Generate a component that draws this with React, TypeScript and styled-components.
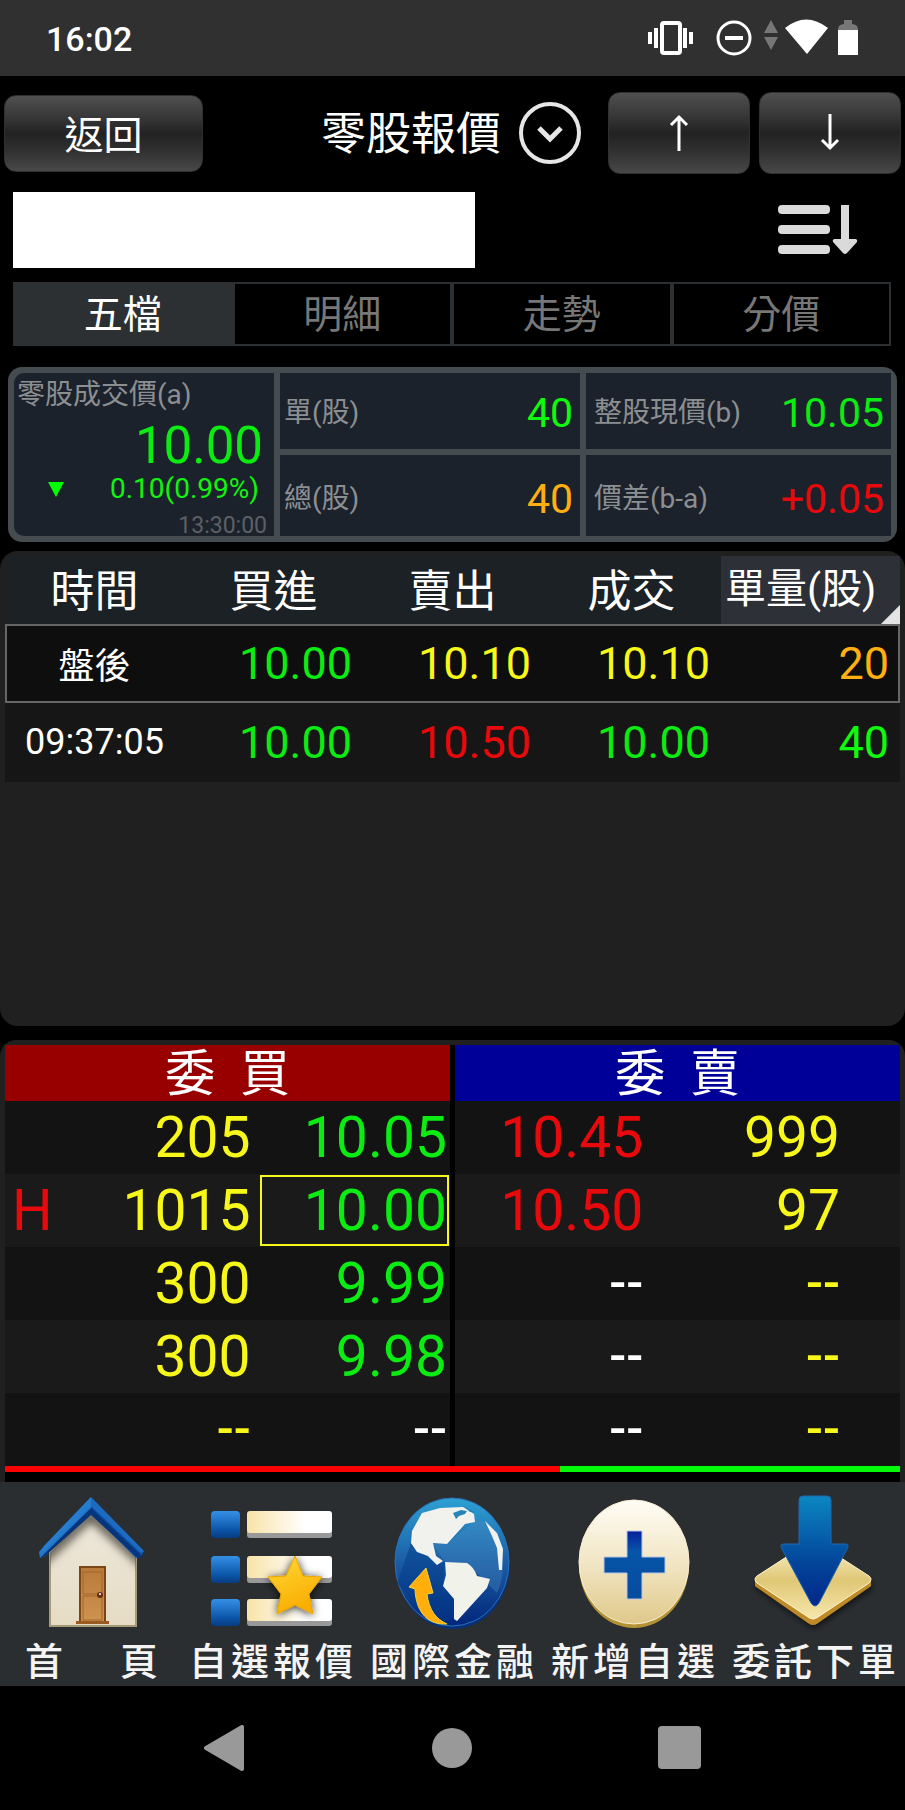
import React from 'react';
import styled, { createGlobalStyle } from 'styled-components';

const GlobalStyle = createGlobalStyle`
  * { box-sizing: border-box; }
  body { margin: 0; background: #000; }
  button, input { font: inherit; color: inherit; }
`;

const colors = {
  green: '#0bec12',
  lime: '#0dfb0d',
  yellow: '#f7f71a',
  red: '#e8090c',
  orange: '#ffb010',
  white: '#fff',
};
type Tone = keyof typeof colors;

const Screen = styled.div`
  display: flex;
  flex-direction: column;
  min-height: 100vh;
  background: #000;
  color: #fff;
  font-family: Roboto, 'Noto Sans CJK TC', sans-serif;
`;

const StatusBar = styled.header`
  display: flex;
  align-items: center;
  justify-content: space-between;
  height: 76px;
  padding: 2px 46px 0;
  background: #303030;
  font-size: 34px;
  font-weight: 500;
`;

const StatusIcons = styled.svg`
  width: 212px;
  height: 40px;
`;

const TopBar = styled.div`
  display: flex;
  align-items: center;
  gap: 9px;
  height: 114px;
  padding: 0 4px;
`;

const GlossButton = styled.button<{ $wide?: boolean }>`
  display: flex;
  align-items: center;
  justify-content: center;
  flex: 0 0 ${(p) => (p.$wide ? 199 : 142)}px;
  height: ${(p) => (p.$wide ? 77 : 82)}px;
  padding: 0 0 3px;
  border: 1px solid #303030;
  border-radius: 12px;
  background: linear-gradient(#505050, #363636 30%, #222 50%, #303030 72%, #484848);
  font-size: 39px;
  cursor: pointer;
`;

const TitleButton = styled.button`
  display: flex;
  flex: 1;
  align-items: center;
  justify-content: flex-end;
  gap: 18px;
  padding: 0 18px 0 0;
  border: 0;
  background: none;
  font-size: 45px;
`;

const TitleText = styled.span`
  padding-bottom: 5px;
`;

const SearchRow = styled.div`
  display: flex;
  align-items: center;
  justify-content: space-between;
  padding: 2px 47px 0 13px;
`;

const StockInput = styled.input`
  flex: 0 0 462px;
  min-width: 0;
  height: 76px;
  border: 0;
  padding: 0 12px;
  background: #fff;
  color: #000;
  font-size: 36px;
`;

const IconButton = styled.button`
  display: flex;
  padding: 0;
  border: 0;
  background: none;
`;

const Tabs = styled.nav`
  display: grid;
  grid-template-columns: repeat(4, 1fr);
  gap: 4px;
  margin: 14px 14px 0 13px;
  padding: 2px;
  background: #2c3033;
`;

const Tab = styled.button<{ $active?: boolean }>`
  height: 60px;
  padding: 2px 0 0;
  border: 0;
  background: ${(p) => (p.$active ? '#2c3033' : '#000')};
  color: ${(p) => (p.$active ? '#fff' : '#777')};
  font-size: 39px;
  line-height: 58px;
`;

const Summary = styled.section`
  display: grid;
  grid-template-columns: 260fr 300fr 305fr;
  grid-template-rows: 76px 81px;
  gap: 6px;
  margin: 21px 8px 0;
  padding: 6px;
  border-radius: 14px;
  background: #454c4f;
  overflow: hidden;
`;

const DealCell = styled.div`
  display: flex;
  flex-direction: column;
  grid-row: span 2;
  padding: 1px 7px 0 3px;
  border-radius: 10px 0 0 10px;
  background: #1c222c;
`;

const Cell = styled.div<{ $inset?: boolean; $low?: boolean }>`
  display: flex;
  align-items: center;
  justify-content: space-between;
  padding: ${(p) => (p.$low ? 7 : 3)}px 7px 0 ${(p) => (p.$inset ? 8 : 4)}px;
  background: #1c222c;
`;

const Label = styled.span`
  color: #8c8f92;
  font-size: 28px;
  line-height: 42px;
`;

const Price = styled.strong<{ $tone: Tone }>`
  padding-right: 4px;
  color: ${(p) => colors[p.$tone]};
  font-size: 51px;
  font-weight: 400;
  line-height: 60px;
  text-align: right;
`;

const Change = styled.div`
  display: flex;
  align-items: center;
  justify-content: space-between;
  padding: 0 8px 0 31px;
  color: #0ff50f;
  font-size: 28px;
  line-height: 26px;
`;

const Stamp = styled.time`
  padding-top: 12px;
  color: #5c6066;
  font-size: 23px;
  line-height: 24px;
  text-align: right;
`;

const Value = styled.span<{ $tone: Tone }>`
  color: ${(p) => colors[p.$tone]};
  font-size: 41px;
`;

const TradePanel = styled.section`
  height: 475px;
  margin-top: 9px;
  padding: 5px 5px 6px;
  border-radius: 18px;
  background: #202020;
`;

const TradeTable = styled.table`
  width: 100%;
  table-layout: fixed;
  border-spacing: 0;
  text-align: right;
`;

const HeadCell = styled.th`
  height: 68px;
  padding: 4px 0 0;
  background: #1b2124;
  font-size: 44px;
  font-weight: 400;
  line-height: 64px;
  text-align: center;
`;

const SortCell = styled(HeadCell)`
  padding: 0 0 2px 4px;
  background: linear-gradient(315deg, #e4e4e4 13px, #2d3036 14px);
  font-size: 41px;
  text-align: left;
`;

const TradeRow = styled.tr<{ $selected?: boolean }>`
  background: ${(p) => (p.$selected ? '#0e0e0e' : '#161616')};
  outline: ${(p) => (p.$selected ? '2px solid #666' : 'none')};
  outline-offset: -2px;
`;

const TimeCell = styled.td`
  height: 79px;
  padding: 0 0 2px;
  font-size: 36px;
  text-align: center;
`;

const NumCell = styled.td<{ $tone: Tone }>`
  height: 79px;
  padding: 0 11px 0 0;
  color: ${(p) => colors[p.$tone]};
  font-size: 45px;
`;

const BookPanel = styled.section`
  margin-top: 14px;
  padding: 5px 5px 0;
  border-radius: 16px 16px 0 0;
  background: #202020;
`;

const BookSides = styled.div`
  display: grid;
  grid-template-columns: 1fr 1fr;
  gap: 5px;
  background: #000;
`;

const BookTable = styled.table`
  width: 100%;
  table-layout: fixed;
  border-spacing: 0;
  text-align: right;
`;

const SideTitle = styled.th<{ $side: 'buy' | 'sell' }>`
  height: 56px;
  padding: 3px 0 0;
  background: ${(p) => (p.$side === 'buy' ? '#980000' : '#000098')};
  font-size: 50px;
  font-weight: 400;
  line-height: 53px;
  text-align: center;
  white-space: pre;
`;

const BookRow = styled.tr`
  background: #1a1a1a;
  &:nth-child(odd) { background: #131313; }
`;

const BookCell = styled.td<{ $tone: Tone; $boxed?: boolean; $end?: number; $empty?: boolean }>`
  height: 73px;
  padding: ${(p) => (p.$empty ? '0' : '1px')} ${(p) => p.$end ?? 3}px ${(p) => (p.$empty ? '1px' : '0')} 0;
  color: ${(p) => colors[p.$tone]};
  font-size: ${(p) => (p.$empty ? 50 : 57)}px;
  font-weight: ${(p) => (p.$empty ? 500 : 400)};
  line-height: 72px;
  outline: ${(p) => (p.$boxed ? '2px solid #f7f71a' : 'none')};
  outline-offset: -3px;
`;

const FlagCell = styled.td`
  padding: 1px 0 0 7px;
  color: #e8090c;
  font-size: 57px;
  line-height: 72px;
  text-align: left;
`;

const RatioBar = styled.div`
  display: flex;
  height: 16px;
  border-bottom: 10px solid #000;
  background: #00fa0a;
`;

const RatioBuy = styled.div`
  background: #f00;
`;

const BottomNav = styled.nav`
  display: grid;
  grid-template-columns: repeat(5, 1fr);
  height: 204px;
  background: #2a2e31;
`;

const NavLink = styled.a<{ $short?: boolean }>`
  display: flex;
  flex-direction: column;
  gap: 3px;
  padding: 11px ${(p) => (p.$short ? 23 : 9)}px 0 ${(p) => (p.$short ? 25 : 8)}px;
  color: #f4f4f4;
  font-size: 38px;
  font-weight: 500;
  line-height: 44px;
  text-align-last: justify;
  text-decoration: none;
`;

const NavIcon = styled.svg`
  align-self: center;
  flex: none;
  width: 130px;
  height: 144px;
`;

const SystemNav = styled.footer`
  display: grid;
  grid-template-columns: repeat(3, 228px);
  justify-content: center;
  align-items: center;
  height: 125px;
  padding: 0 2px 2px 0;
`;

const SystemButton = styled(IconButton)`
  justify-content: center;
`;

interface Quote { text: string; tone: Tone; }
const q = (text: string, tone: Tone): Quote => ({ text, tone });

const trades = [
  { time: '盤後', selected: true, cells: [q('10.00', 'green'), q('10.10', 'yellow'), q('10.10', 'yellow'), q('20', 'orange')] },
  { time: '09:37:05', selected: false, cells: [q('10.00', 'green'), q('10.50', 'red'), q('10.00', 'green'), q('40', 'lime')] },
];

const NONE = '--';

const bids = [
  { flag: '', size: '205', price: q('10.05', 'green') },
  { flag: 'H', size: '1015', price: q('10.00', 'green'), boxed: true },
  { flag: '', size: '300', price: q('9.99', 'green') },
  { flag: '', size: '300', price: q('9.98', 'green') },
  { flag: '', size: NONE, price: q(NONE, 'white') },
];

const asks = [
  { price: q('10.45', 'red'), size: '999' },
  { price: q('10.50', 'red'), size: '97' },
  { price: q(NONE, 'white'), size: NONE },
  { price: q(NONE, 'white'), size: NONE },
  { price: q(NONE, 'white'), size: NONE },
];

const buyRatio = 62;

const HomeIcon = () => (
  <NavIcon viewBox="0 0 130 144" aria-hidden="true">
    <defs>
      <linearGradient id="wall" x2="0" y2="1"><stop stopColor="#eee8dc" /><stop offset="1" stopColor="#e6dcc4" /></linearGradient>
      <linearGradient id="roofL" x2="1" y2="1"><stop stopColor="#2f8fe0" /><stop offset="1" stopColor="#1560b4" /></linearGradient>
      <linearGradient id="door" x2="0" y2="1"><stop stopColor="#b87a38" /><stop offset="1" stopColor="#cf9350" /></linearGradient>
      <clipPath id="wallClip"><path d="M23 60 64 19l45 41v72H23z" /></clipPath>
      <filter id="eaveBlur" x="-20%" y="-20%" width="140%" height="160%"><feGaussianBlur stdDeviation="5" /></filter>
    </defs>
    <path d="M23 60 64 19l45 41v73H23z" fill="url(#wall)" stroke="#a69a78" strokeWidth="2" />
    <g clipPath="url(#wallClip)">
      <path d="m10 72 54-50 55 50" fill="none" stroke="#57534a" strokeWidth="10" filter="url(#eaveBlur)" />
    </g>
    <path d="m12 59 1 6 5-2 46-43V4L17 53z" fill="url(#roofL)" />
    <path d="m64 4 53 54-3 6-5 1-45-45z" fill="#0d4fa6" />
    <path d="m64 4 53 54-3 2L64 13 15 60l2-7z" fill="#2a83d6" opacity=".55" />
    <path d="m13 65 51-50 52 49-5 1-47-43-46 41z" fill="#06357c" />
    <path d="M53 74h25v55H53z" fill="url(#door)" stroke="#7c4516" strokeWidth="2" />
    <path d="M56 79h19v22H56zM56 103h19v24H56z" fill="none" stroke="#a0682c" strokeWidth="1" />
    <path d="M49 128h33v3H49z" fill="#9a5a22" />
    <circle cx="73" cy="102" r="3" fill="#6b2d13" /><circle cx="73" cy="101" r="1" fill="#fff" />
  </NavIcon>
);

const listRows = [18, 63, 106];
const ListIcon = () => (
  <NavIcon viewBox="0 0 130 144" aria-hidden="true">
    <defs>
      <linearGradient id="tile" x2="0" y2="1"><stop stopColor="#3590e6" /><stop offset=".7" stopColor="#0b55a8" /><stop offset="1" stopColor="#073c80" /></linearGradient>
      <linearGradient id="strip"><stop stopColor="#f8e3a8" /><stop offset=".7" stopColor="#fff" /></linearGradient>
      <linearGradient id="star" x2=".4" y2="1"><stop stopColor="#ffd83a" /><stop offset="1" stopColor="#f9ae00" /></linearGradient>
      <filter id="starShade" x="-30%" y="-30%" width="160%" height="160%"><feDropShadow dx="0" dy="1" stdDeviation="4" floodColor="#000" floodOpacity=".8" /></filter>
    </defs>
    {listRows.map((y) => (
      <g key={y}>
        <rect x="5" y={y} width="29" height="27" rx="4" fill="url(#tile)" />
        <rect x="41" y={y + 4} width="85" height="23" rx="3" fill="#999" />
        <rect x="41" y={y} width="85" height="22" rx="3" fill="url(#strip)" />
      </g>
    ))}
    <path d="m89 63 8 20 19 1-13 17 4 20-18-9-18 9 4-20-13-17 18-1z" fill="url(#star)" stroke="#e9a400" strokeLinejoin="round" filter="url(#starShade)" />
  </NavIcon>
);

const GlobeIcon = () => (
  <NavIcon viewBox="0 0 130 144" aria-hidden="true">
    <defs>
      <linearGradient id="sea" x2="0" y2="1"><stop stopColor="#2da1d4" /><stop offset=".5" stopColor="#1b5da5" /><stop offset="1" stopColor="#02267b" /></linearGradient>
    </defs>
    <ellipse cx="66" cy="71" rx="57" ry="65" fill="#07317a" />
    <ellipse cx="65" cy="69" rx="57" ry="64" fill="url(#sea)" stroke="#2b72b6" />
    <path d="M24 50 50 72l8-3-2 24 11 13v20l-20 4L10 90z" fill="#023a88" opacity=".5" />
    <path d="M88 28 60 51l-14 0 12 18 22 1 30 30c10-20 8-50-10-72z" fill="#4a8cc4" opacity=".35" />
    <path d="m35 20 18-5 23-1 11 7 1 8-10 2-18 20-14-1 3 13 7 5-6 4-9-9-11-4-6-9 1-12z" fill="#f1f2ee" />
    <path d="m66 20 8-3 6 1-2 3-6 2-3 3zM78 14l10 5-5 0z" fill="#2784b9" />
    <path d="m58 69 22 1q7 4 10 13l13 3-3 9-30 33-3-2V106L56 93l3-11z" fill="#f1f2ea" />
    <path d="m98 28 12 12 6 16-1 21h-3l-2-22-5-12z" fill="#f1f2ee" />
    <path d="m22 94 17-19 7 25-6 1c2 16 9 25 20 30-18 1-31-10-32-35z" fill="#ffae0c" stroke="#f0d23a" strokeWidth="1" />
  </NavIcon>
);

const PlusIcon = () => (
  <NavIcon viewBox="0 0 130 144" aria-hidden="true">
    <defs>
      <linearGradient id="coin" x2="0" y2="1"><stop stopColor="#fffdf5" /><stop offset=".55" stopColor="#f0e3c0" /><stop offset="1" stopColor="#dfc889" /></linearGradient>
      <linearGradient id="cross" x2="0" y2="1"><stop stopColor="#06209a" /><stop offset=".3" stopColor="#0655a8" /><stop offset="1" stopColor="#064b9e" /></linearGradient>
    </defs>
    <ellipse cx="66" cy="72" rx="55" ry="63" fill="#b29234" />
    <ellipse cx="66" cy="69" rx="55" ry="62" fill="url(#coin)" stroke="#f8edcf" />
    <path d="M59 38h15v26h23v16H74v26H59V80H36V64h23z" fill="url(#cross)" stroke="#b9c4e2" strokeWidth="1" />
  </NavIcon>
);

const OrderIcon = () => (
  <NavIcon viewBox="-2 0 130 144" aria-hidden="true">
    <defs>
      <linearGradient id="plate" x2="0" y2="1"><stop stopColor="#fff5d0" /><stop offset=".5" stopColor="#dfc776" /><stop offset="1" stopColor="#f6e7ab" /></linearGradient>
      <linearGradient id="arrow" x2="0" y2="1"><stop stopColor="#0b87c2" /><stop offset=".6" stopColor="#03459a" /><stop offset="1" stopColor="#02288a" /></linearGradient>
      <filter id="plateShade" x="-20%" y="-20%" width="140%" height="150%"><feDropShadow dx="1" dy="3" stdDeviation="3" floodColor="#000" floodOpacity=".6" /></filter>
    </defs>
    <path d="M4 86v7l53 37q5 4 10 0l53-37v-7z" fill="#bf8a27" filter="url(#plateShade)" />
    <path d="m6 83 51-33q5-3 10 0l51 33q4 3 0 7l-51 34q-5 4-10 0L6 90q-4-4 0-7z" fill="url(#plate)" stroke="#fff6cf" />
    <path d="M52 3h24q4 0 4 4v44h14q5 0 2 5l-28 54q-4 6-8 0L31 56q-3-5 2-5h15V7q0-4 4-4z" fill="url(#arrow)" stroke="#1e66ae" />
  </NavIcon>
);

const navItems = [
  { label: '首頁', Icon: HomeIcon, short: true },
  { label: '自選報價', Icon: ListIcon },
  { label: '國際金融', Icon: GlobeIcon },
  { label: '新增自選', Icon: PlusIcon },
  { label: '委託下單', Icon: OrderIcon },
];

const Arrow = ({ down }: { down?: boolean }) => (
  <svg width="20" height="38" viewBox="0 0 20 38" fill="none" stroke="#fff" strokeWidth="3" aria-hidden="true">
    {down ? <path d="M10 1v34M2 27l8 8 8-8" /> : <path d="M10 38V4M2 12l8-8 8 8" />}
  </svg>
);

export default function App() {
  return (
    <Screen>
      <GlobalStyle />
      <StatusBar>
        <time>16:02</time>
        <StatusIcons viewBox="0 0 212 40" aria-hidden="true">
          <g fill="none" stroke="#fff">
            <rect x="15" y="4" width="18" height="30" rx="2" strokeWidth="4" />
            <path d="M3 13v12M9 9v20M38 9v20M44 13v12" strokeWidth="4" />
            <circle cx="87" cy="19" r="16" strokeWidth="3" />
            <path d="M78 19h18" strokeWidth="4" />
          </g>
          <path d="m124 1 7 13h-14zM117 18h14l-7 13z" fill="#777" />
          <path d="M138 9q21-17 43 0l-21 26z" fill="#fff" />
          <path d="M191 11q0-6 6-6v-4h8v4q6 0 6 6z" fill="#777" />
          <path d="M191 11h20v25h-20z" fill="#fff" />
        </StatusIcons>
      </StatusBar>

      <TopBar>
        <GlossButton $wide>返回</GlossButton>
        <TitleButton>
          <TitleText>零股報價</TitleText>
          <svg width="62" height="62" viewBox="0 0 62 62" fill="none" stroke="#e6e6e6" aria-hidden="true">
            <circle cx="31" cy="31" r="29" strokeWidth="4" />
            <path d="m20 26 11 11 11-11" strokeWidth="5" />
          </svg>
        </TitleButton>
        <GlossButton aria-label="上一檔"><Arrow /></GlossButton>
        <GlossButton aria-label="下一檔"><Arrow down /></GlossButton>
      </TopBar>

      <SearchRow>
        <StockInput type="text" aria-label="股票" />
        <IconButton aria-label="排序">
          <svg width="80" height="52" viewBox="0 0 80 52" fill="#dadada" aria-hidden="true">
            <rect y="1" width="52" height="9" rx="4" />
            <rect y="21" width="52" height="9" rx="4" />
            <rect y="41" width="52" height="9" rx="4" />
            <path d="M63 1h8v34h7q2 1 1 3L69 49q-2 2-4 0L55 38q-1-2 1-3h7z" />
          </svg>
        </IconButton>
      </SearchRow>

      <Tabs>
        <Tab $active>五檔</Tab>
        <Tab>明細</Tab>
        <Tab>走勢</Tab>
        <Tab>分價</Tab>
      </Tabs>

      <Summary>
        <DealCell>
          <Label>零股成交價(a)</Label>
          <Price $tone="green">10.00</Price>
          <Change>
            <svg width="16" height="15" viewBox="0 0 16 15" fill="#0f0" aria-hidden="true"><path d="M0 0h16L8 15z" /></svg>
            <span>0.10(0.99%)</span>
          </Change>
          <Stamp>13:30:00</Stamp>
        </DealCell>
        <Cell><Label>單(股)</Label><Value $tone="lime">40</Value></Cell>
        <Cell $inset><Label>整股現價(b)</Label><Value $tone="green">10.05</Value></Cell>
        <Cell $low><Label>總(股)</Label><Value $tone="orange">40</Value></Cell>
        <Cell $inset $low><Label>價差(b-a)</Label><Value $tone="red">+0.05</Value></Cell>
      </Summary>

      <TradePanel>
        <TradeTable>
          <thead>
            <tr>
              <HeadCell>時間</HeadCell>
              <HeadCell>買進</HeadCell>
              <HeadCell>賣出</HeadCell>
              <HeadCell>成交</HeadCell>
              <SortCell>單量(股)</SortCell>
            </tr>
          </thead>
          <tbody>
            {trades.map((t) => (
              <TradeRow key={t.time} $selected={t.selected}>
                <TimeCell>{t.time}</TimeCell>
                {t.cells.map((c, i) => <NumCell key={i} $tone={c.tone}>{c.text}</NumCell>)}
              </TradeRow>
            ))}
          </tbody>
        </TradeTable>
      </TradePanel>

      <BookPanel>
        <BookSides>
          <BookTable>
            <colgroup><col width="13%" /><col width="44%" /><col width="43%" /></colgroup>
            <thead><tr><SideTitle $side="buy" colSpan={3}>{'委  買'}</SideTitle></tr></thead>
            <tbody>
              {bids.map((b, i) => (
                <BookRow key={i}>
                  <FlagCell>{b.flag}</FlagCell>
                  <BookCell $tone="yellow" $end={8} $empty={b.size === NONE}>{b.size}</BookCell>
                  <BookCell $tone={b.price.tone} $boxed={b.boxed} $empty={b.price.text === NONE}>{b.price.text}</BookCell>
                </BookRow>
              ))}
            </tbody>
          </BookTable>
          <BookTable>
            <colgroup><col width="43%" /><col width="57%" /></colgroup>
            <thead><tr><SideTitle $side="sell" colSpan={2}>{'委  賣'}</SideTitle></tr></thead>
            <tbody>
              {asks.map((a, i) => (
                <BookRow key={i}>
                  <BookCell $tone={a.price.tone} $empty={a.price.text === NONE}>{a.price.text}</BookCell>
                  <BookCell $tone="yellow" $end={60} $empty={a.size === NONE}>{a.size}</BookCell>
                </BookRow>
              ))}
            </tbody>
          </BookTable>
        </BookSides>
        <RatioBar><RatioBuy style={{ width: `${buyRatio}%` }} /></RatioBar>
      </BookPanel>

      <BottomNav>
        {navItems.map(({ label, Icon, short }) => (
          <NavLink key={label} href="#" $short={short}>
            <Icon />
            {label}
          </NavLink>
        ))}
      </BottomNav>

      <SystemNav>
        <SystemButton aria-label="Back">
          <svg width="40" height="46" viewBox="0 0 40 46" aria-hidden="true"><path d="M38 2v42L2 23z" fill="#999" stroke="#999" strokeWidth="4" strokeLinejoin="round" /></svg>
        </SystemButton>
        <SystemButton aria-label="Home">
          <svg width="40" height="40" viewBox="0 0 40 40" aria-hidden="true"><circle cx="20" cy="20" r="20" fill="#999" /></svg>
        </SystemButton>
        <SystemButton aria-label="Recent">
          <svg width="43" height="43" viewBox="0 0 43 43" aria-hidden="true"><rect width="43" height="43" rx="4" fill="#999" /></svg>
        </SystemButton>
      </SystemNav>
    </Screen>
  );
}
